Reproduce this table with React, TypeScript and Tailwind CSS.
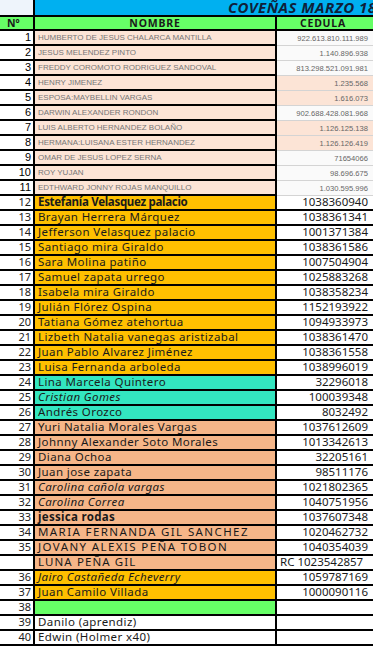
import React from "react";

type Row = {
  n: string;
  name: string;
  ced: string;
  nameBg: string;
  cedBg?: string;
  bold?: boolean;
  italic?: boolean;
  old?: boolean;
  cedLeft?: boolean;
  track?: string;
};

const PEACH = "bg-[#fce4d6]";
const ORANGE = "bg-[#ffc000]";
const TEAL = "bg-[#33e6c0]";
const TAN = "bg-[#f6b688]";
const GREEN = "bg-[#66ff66]";
const WHITE = "bg-white";
const OFF = "bg-[#fafafa]";

const CAPS = "tracking-[1.4px]";
const CAPS2 = "tracking-[1.1px]";
const BOLDT = "tracking-[-0.3px]";

const rows: Row[] = [
  { n: "1", name: "HUMBERTO DE JESUS CHALARCA MANTILLA", ced: "922.613.810.111.989", nameBg: PEACH, cedBg: OFF, old: true },
  { n: "2", name: "JESUS MELENDEZ PINTO", ced: "1.140.896.938", nameBg: PEACH, cedBg: OFF, old: true },
  { n: "3", name: "FREDDY COROMOTO RODRIGUEZ SANDOVAL", ced: "813.298.521.091.981", nameBg: PEACH, cedBg: OFF, old: true },
  { n: "4", name: "HENRY JIMENEZ", ced: "1.235.568", nameBg: PEACH, cedBg: PEACH, old: true },
  { n: "5", name: "ESPOSA:MAYBELLIN VARGAS", ced: "1.616.073", nameBg: PEACH, cedBg: PEACH, old: true },
  { n: "6", name: "DARWIN ALEXANDER RONDON", ced: "902.688.428.081.968", nameBg: PEACH, cedBg: OFF, old: true },
  { n: "7", name: "LUIS ALBERTO HERNANDEZ BOLAÑO", ced: "1.126.125.138", nameBg: PEACH, cedBg: PEACH, old: true },
  { n: "8", name: "HERMANA:LUISANA ESTER HERNANDEZ", ced: "1.126.126.419", nameBg: PEACH, cedBg: PEACH, old: true },
  { n: "9", name: "OMAR DE JESUS LOPEZ SERNA", ced: "71654066", nameBg: PEACH, cedBg: OFF, old: true },
  { n: "10", name: "ROY YUJAN", ced: "98.696.675", nameBg: PEACH, cedBg: OFF, old: true },
  { n: "11", name: "EDTHWARD JONNY ROJAS MANQUILLO", ced: "1.030.595.996", nameBg: PEACH, cedBg: OFF, old: true },
  { n: "12", name: "Estefanía Velasquez palacio", ced: "1038360940", nameBg: ORANGE, bold: true, track: BOLDT },
  { n: "13", name: "Brayan Herrera Márquez", ced: "1038361341", nameBg: ORANGE },
  { n: "14", name: "Jefferson Velasquez palacio", ced: "1001371384", nameBg: ORANGE },
  { n: "15", name: "Santiago mira Giraldo", ced: "1038361586", nameBg: ORANGE },
  { n: "16", name: "Sara Molina patiño", ced: "1007504904", nameBg: ORANGE },
  { n: "17", name: "Samuel zapata urrego", ced: "1025883268", nameBg: ORANGE },
  { n: "18", name: "Isabela mira Giraldo", ced: "1038358234", nameBg: ORANGE },
  { n: "19", name: "Julián Flórez Ospina", ced: "1152193922", nameBg: ORANGE },
  { n: "20", name: "Tatiana Gómez atehortua", ced: "1094933973", nameBg: ORANGE },
  { n: "21", name: "Lizbeth Natalia vanegas aristizabal", ced: "1038361470", nameBg: ORANGE },
  { n: "22", name: "Juan Pablo Alvarez Jiménez", ced: "1038361558", nameBg: ORANGE },
  { n: "23", name: "Luisa Fernanda arboleda", ced: "1038996019", nameBg: ORANGE },
  { n: "24", name: "Lina Marcela Quintero", ced: "32296018", nameBg: TEAL },
  { n: "25", name: "Cristian Gomes", ced: "100039348", nameBg: TEAL, italic: true },
  { n: "26", name: "Andrés Orozco", ced: "8032492", nameBg: TEAL },
  { n: "27", name: "Yuri Natalia Morales Vargas", ced: "1037612609", nameBg: TAN },
  { n: "28", name: "Johnny Alexander Soto Morales", ced: "1013342613", nameBg: TAN },
  { n: "29", name: "Diana Ochoa", ced: "32205161", nameBg: TAN },
  { n: "30", name: "Juan jose zapata", ced: "98511176", nameBg: TAN },
  { n: "31", name: "Carolina cañola vargas", ced: "1021802365", nameBg: TAN, italic: true },
  { n: "32", name: "Carolina Correa", ced: "1040751956", nameBg: TAN, italic: true },
  { n: "33", name: "jessica rodas", ced: "1037607348", nameBg: TAN, bold: true, track: "tracking-[0.3px]" },
  { n: "34", name: "MARIA FERNANDA GIL SANCHEZ", ced: "1020462732", nameBg: TAN, track: CAPS },
  { n: "35", name: "JOVANY ALEXIS PEÑA TOBON", ced: "1040354039", nameBg: TAN, track: CAPS },
  { n: "", name: "LUNA PEÑA GIL", ced: "RC 1023542857", nameBg: TAN, cedLeft: true, track: CAPS2 },
  { n: "36", name: "Jairo Castañeda Echeverry", ced: "1059787169", nameBg: ORANGE, italic: true },
  { n: "37", name: "Juan Camilo Villada", ced: "1000090116", nameBg: ORANGE },
  { n: "38", name: "", ced: "", nameBg: GREEN },
  { n: "39", name: "Danilo (aprendiz)", ced: "", nameBg: WHITE },
  { n: "40", name: "Edwin (Holmer x40)", ced: "", nameBg: WHITE },
];

const comic = "font-['Comic_Sans_MS','Noto_Sans',sans-serif]";
const arial = "font-['Liberation_Sans',Arial,sans-serif]";

export default function App() {
  return (
    <div className="w-[373px] h-[650px] overflow-hidden bg-white">
      {/* title row */}
      <div className="flex h-[17px] border-b-2 border-black">
        <div className="w-[35px] shrink-0 border-r-2 border-black bg-[#eef4fb]" />
        <div className="flex-1 bg-[#00b0f0] overflow-hidden whitespace-nowrap pl-[193px] leading-[14px]">
          <span className={`${comic} text-[15px] font-bold italic text-[#0f1f3a] tracking-[0.5px]`}>
            COVEÑAS MARZO 18
          </span>
        </div>
      </div>
      {/* header row */}
      <div className={`flex h-[14px] border-b-2 border-black bg-[#66ff66] ${comic} font-bold text-[10.5px] leading-[12px] text-[#1a1a1a]`}>
        <div className="w-[35px] shrink-0 border-r-2 border-black pl-[7px]">Nº</div>
        <div className="w-[242px] shrink-0 border-r-2 border-black text-center tracking-[0.8px]">NOMBRE</div>
        <div className="flex-1 text-center tracking-[0.8px] pr-[4px]">CEDULA</div>
      </div>
      {rows.map((r, i) => (
        <div key={i} className="flex h-[15px]">
          <div
            className={`w-[35px] shrink-0 border-r-2 border-b-2 border-black bg-white text-right pr-[2px] ${
              r.old ? `${arial} text-[11px] leading-[13px] text-black` : `${comic} text-[11px] leading-[12px] text-[#222]`
            }`}
          >
            {r.n}
          </div>
          <div
            className={`w-[242px] shrink-0 border-r-2 border-b-2 border-black ${r.nameBg} pl-[3px] whitespace-nowrap ${
              r.old
                ? `${arial} text-[8px] leading-[14px] text-[#777]`
                : `${comic} text-[11.5px] leading-[12px] text-[#1a1a1a] ${r.track ?? "tracking-[0.4px]"}`
            } ${r.bold ? "font-bold" : ""} ${r.italic ? "italic" : ""}`}
          >
            {r.name}
          </div>
          <div
            className={`flex-1 whitespace-nowrap ${
              r.old
                ? `${r.cedBg} border-b border-[#d4d4d4] ${arial} text-[7.6px] leading-[14px] text-[#666] text-right pr-[5px] pt-[1px]`
                : `bg-white border-b-2 border-black ${comic} text-[11.5px] leading-[12px] text-[#1a1a1a] ${
                    r.cedLeft ? "text-left pl-[3px]" : "text-right pr-[5px]"
                  }`
            }`}
          >
            {r.ced}
          </div>
        </div>
      ))}
    </div>
  );
}
